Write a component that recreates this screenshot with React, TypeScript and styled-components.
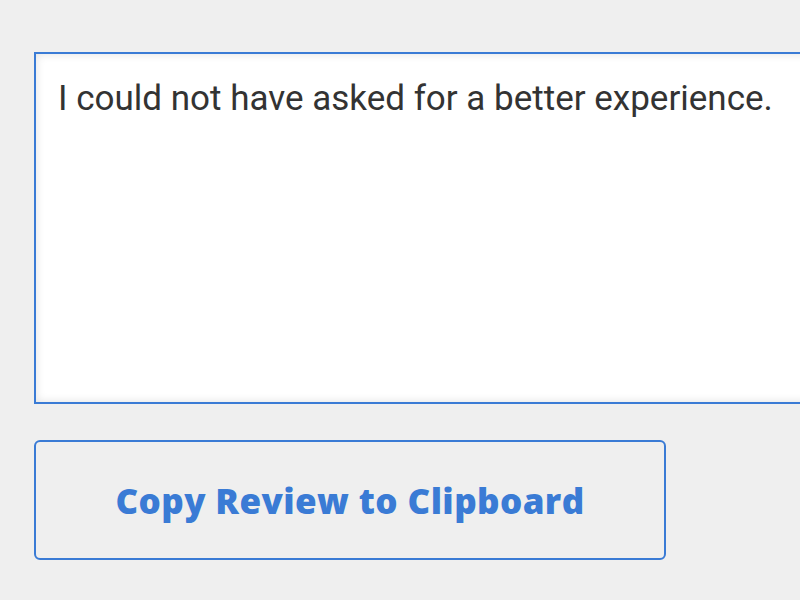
import React from "react";
import styled, { createGlobalStyle } from "styled-components";

const Global = createGlobalStyle`
  html, body { margin: 0; padding: 0; background: #efefef; }
  body { width: 800px; height: 600px; overflow: hidden; }
`;

const Page = styled.div`
  width: 800px;
  height: 600px;
  box-sizing: border-box;
  padding: 52px 0 0 34px;
  display: flex;
  flex-direction: column;
  gap: 36px;
  background: #efefef;
  overflow: hidden;
`;

const ReviewBox = styled.textarea`
  box-sizing: border-box;
  width: 820px;
  height: 352px;
  margin: 0;
  border: 2px solid #3a7bd5;
  border-right: none;
  background: #fff;
  box-shadow: inset 0 0 10px rgba(0, 0, 0, 0.12);
  padding: 22px 22px;
  font-family: Roboto, "Liberation Sans", sans-serif;
  font-size: 35px;
  line-height: 1.3;
  color: #333;
  resize: none;
  outline: none;
`;

const CopyButton = styled.button`
  box-sizing: border-box;
  width: 632px;
  height: 120px;
  border: 2px solid #3a7bd5;
  border-radius: 6px;
  background: transparent;
  color: #3a7bd5;
  font-family: "Open Sans", Lato, sans-serif;
  font-weight: 800;
  font-size: 35px;
  letter-spacing: 0.4px;
  cursor: pointer;
`;

export default function App() {
  return (
    <>
      <Global />
      <Page>
        <ReviewBox defaultValue="I could not have asked for a better experience." />
        <CopyButton>Copy Review to Clipboard</CopyButton>
      </Page>
    </>
  );
}
